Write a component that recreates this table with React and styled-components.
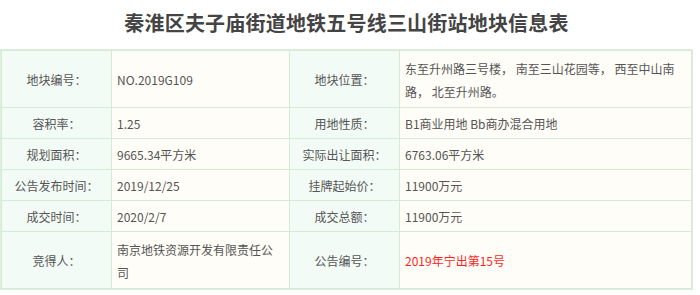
import React from "react";
import styled, { createGlobalStyle } from "styled-components";

const GlobalStyle = createGlobalStyle`
  html, body {
    margin: 0;
    padding: 0;
    background: #ffffff;
  }
  body {
    font-family: "Noto Sans CJK SC", "Noto Sans", sans-serif;
  }
`;

const Page = styled.div`
  width: 693px;
`;

const Title = styled.h1`
  margin: 0;
  height: 49px;
  line-height: 45px;
  font-size: 20px;
  font-weight: 700;
  color: #444444;
  text-align: center;
  letter-spacing: 0.2px;
`;

const Frame = styled.div`
  border: 1px solid #dcefdc;
  box-sizing: border-box;
`;

const Table = styled.table`
  width: 100%;
  border-collapse: collapse;
  table-layout: fixed;
  font-size: 12px;
  color: #555555;
`;

const Row = styled.tr`
  height: ${({ $tall }) => ($tall ? "57px" : "31px")};
`;

const Label = styled.td`
  border: 1px solid #d6ebd6;
  background: #f3fbf6;
  text-align: center;
  padding: 0 4px;
  line-height: 23px;
  vertical-align: middle;
`;

const Value = styled.td`
  border: 1px solid #d6ebd6;
  background: #fffdf7;
  text-align: left;
  padding: 3px 12px 2px 5px;
  line-height: 23px;
  vertical-align: middle;
  color: ${({ $red }) => ($red ? "#ff1f1f" : "#555555")};
  word-break: break-all;
`;

const rows = [
  {
    tall: true,
    a: ["地块编号：", "NO.2019G109"],
    b: ["地块位置：", "东至升州路三号楼， 南至三山花园等， 西至中山南路， 北至升州路。"],
  },
  { a: ["容积率：", "1.25"], b: ["用地性质：", "B1商业用地 Bb商办混合用地"] },
  { a: ["规划面积：", "9665.34平方米"], b: ["实际出让面积：", "6763.06平方米"] },
  { a: ["公告发布时间：", "2019/12/25"], b: ["挂牌起始价：", "11900万元"] },
  { a: ["成交时间：", "2020/2/7"], b: ["成交总额：", "11900万元"] },
  {
    tall: true,
    a: ["竞得人：", "南京地铁资源开发有限责任公司"],
    b: ["公告编号：", "2019年宁出第15号"],
    red: true,
  },
];

const App = () => {
  return (
    <Page>
      <GlobalStyle />
      <Title>秦淮区夫子庙街道地铁五号线三山街站地块信息表</Title>
      <Frame>
        <Table>
          <colgroup>
            <col style={{ width: "110px" }} />
            <col style={{ width: "178px" }} />
            <col style={{ width: "110px" }} />
            <col />
          </colgroup>
          <tbody>
            {rows.map((r) => (
              <Row key={r.a[0]} $tall={r.tall}>
                <Label>{r.a[0]}</Label>
                <Value>{r.a[1]}</Value>
                <Label>{r.b[0]}</Label>
                <Value $red={r.red}>{r.b[1]}</Value>
              </Row>
            ))}
          </tbody>
        </Table>
      </Frame>
    </Page>
  );
};

export default App;
